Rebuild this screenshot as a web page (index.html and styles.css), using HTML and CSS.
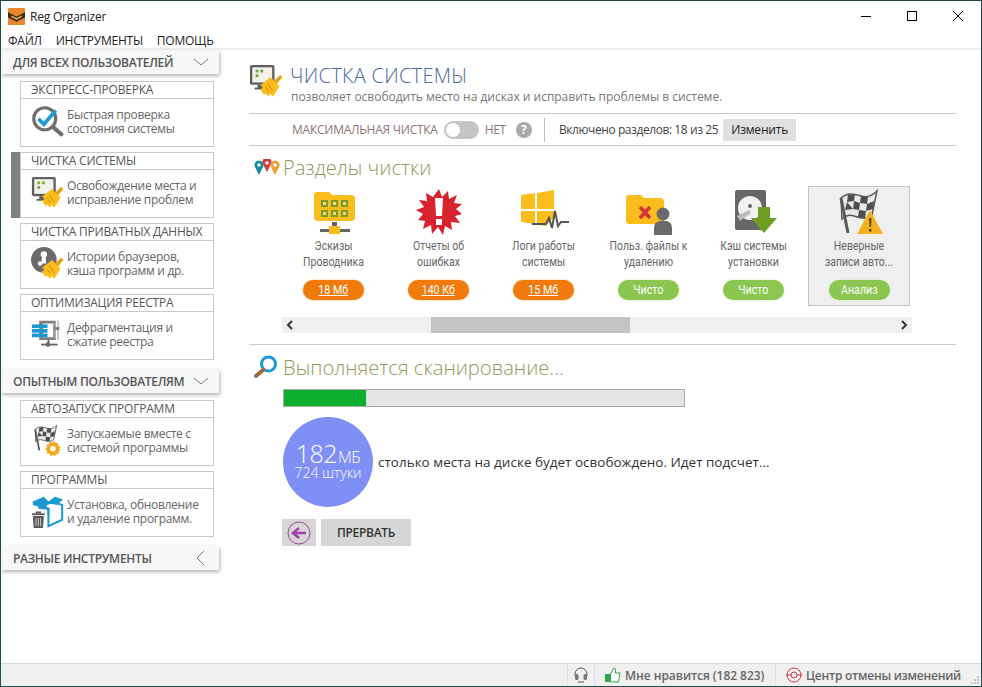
FILE: index.html
```html
<!DOCTYPE html>
<html lang="ru">
<head>
  <meta charset="UTF-8">
  <title>Reg Organizer</title>
  <link rel="stylesheet" href="styles.css">
</head>
<body>
  <svg class="defs" width="0" height="0">
    <defs>
      <symbol id="broom" viewBox="0 0 20 20">
        <path d="M11 7 L17.5 0.5 L19.5 2.5 L13.5 9.5 Z" fill="#e0a010"/>
        <path d="M9.5 2.5 L17 10 L11.5 19 L9 16.5 L8 19 L5 16 L4 17.5 L0.5 12.5 L3 11.5 L1 9 Z" fill="#fbbd1c"/>
        <path d="M7 7.5 L11.5 14 M5 10 L8 14.5" stroke="#d99a0c" stroke-width="1" fill="none"/>
      </symbol>
      <symbol id="monitor" viewBox="0 0 36 36">
        <rect x="1" y="1" width="26" height="21" rx="2" fill="#5f5f5f"/>
        <rect x="3.5" y="3.5" width="21" height="16" fill="#f2f2ea"/>
        <rect x="7" y="6" width="3" height="3" fill="#77a83a"/>
        <rect x="12" y="6" width="3" height="3" fill="#77a83a"/>
        <rect x="7" y="11" width="3" height="3" fill="#77a83a"/>
        <rect x="9" y="22" width="9" height="4" fill="#5f5f5f"/>
        <rect x="6" y="25" width="14" height="2" fill="#5f5f5f"/>
        <use href="#broom" x="11" y="11" width="25" height="25"/>
      </symbol>
      <symbol id="check" viewBox="0 0 36 36">
        <circle cx="15" cy="15" r="12" fill="#fff" stroke="#6e6e6e" stroke-width="3.5"/>
        <path d="M24 24 L33 32" stroke="#6e6e6e" stroke-width="4.5" stroke-linecap="round"/>
        <path d="M8 15 L14 21 L27 6" fill="none" stroke="#1e9ad6" stroke-width="4"/>
      </symbol>
      <symbol id="privacy" viewBox="0 0 36 36">
        <circle cx="14" cy="14" r="14" fill="#6a6a6a"/>
        <circle cx="14" cy="8" r="3.5" fill="#fff"/>
        <path d="M12 10 L16 10 L16.5 18 L11.5 18 Z" fill="#fff"/>
        <circle cx="10" cy="18" r="2.5" fill="#fff"/>
        <use href="#broom" x="11" y="11" width="25" height="25"/>
      </symbol>
      <symbol id="registry" viewBox="0 0 36 36">
        <path d="M9 3 L27 3 L27 6 L13 6 L13 21 L27 21 L27 24 L9 24 Z" fill="#808080"/>
        <rect x="24" y="5" width="3" height="17" fill="#9a9a9a"/>
        <rect x="29" y="3" width="1" height="21" fill="#808080"/>
        <rect x="26" y="10" width="5" height="3" fill="#808080"/>
        <rect x="1" y="7" width="17" height="4" fill="#1a9ad0"/>
        <rect x="1" y="12" width="17" height="4" fill="#1a9ad0"/>
        <rect x="1" y="17" width="17" height="4" fill="#1a9ad0"/>
        <rect x="18" y="24" width="2" height="5" fill="#666"/>
        <rect x="11" y="28" width="18" height="2" fill="#666"/>
        <circle cx="18.5" cy="29" r="2.5" fill="#666"/>
      </symbol>
      <symbol id="flag" viewBox="0 0 46 46">
        <path d="M7 9 C14 3 20 5 27 7 C33 9 38 7 43 2 L38 26 C32 31 26 29 20 27 C15 25 11 27 8 30 Z" fill="#e9e9e9" stroke="#5a5a5a" stroke-width="1.5"/>
        <path d="M14 6 L21 5 L20 12 L13 13 Z M27 7 L34 8 L33 15 L26 14 Z M20 12 L26 14 L25 21 L19 20 Z M33 15 L40 12 L39 20 L32 22 Z M13 13 L19 20 L11 21 Z M25 21 L32 22 L31 29 L24 28 Z" fill="#4f4f4f"/>
        <path d="M7 9 L14 44" stroke="#5a5a5a" stroke-width="3"/>
      </symbol>
      <symbol id="box" viewBox="0 0 36 36">
        <path d="M11 11 L25 8 L34 11 L34 27 L19 34 L19 15 Z" fill="#fff" stroke="#1a9ad0" stroke-width="2.2"/>
        <path d="M2 7 L14 2 L19 7 L26 2 L35 5 L28 11 L19 9 L15 15 L2 11 Z" fill="#1a9ad0"/>
        <path d="M8 14 L19 15 L19 22" stroke="#1a9ad0" stroke-width="2.2" fill="none"/>
        <rect x="1" y="20" width="14" height="2" fill="#555"/>
        <rect x="5" y="18" width="6" height="2" fill="#555"/>
        <path d="M2 23 L14 23 L13 36 L3 36 Z" fill="#555"/>
        <path d="M5.5 25 V34 M8 25 V34 M10.5 25 V34" stroke="#ddd" stroke-width="1"/>
      </symbol>
    </defs>
  </svg>

  <div class="window">
    <div class="titlebar">
      <svg class="app-icon" viewBox="0 0 16 16">
        <rect width="16" height="16" rx="1" fill="#e8872c"/>
        <path d="M0 4 L8 8 L16 4 V9 L8 13 L0 9 Z" fill="#3a2c1c"/>
        <path d="M3 7 L8 9.5 L13 7 L13 8.5 L8 11 L3 8.5 Z" fill="#e9b64a"/>
      </svg>
      <span class="app-name">Reg Organizer</span>
      <div class="win-controls">
        <svg viewBox="0 0 46 30" class="win-btn"><path d="M18 15.5 H28" stroke="#000"/></svg>
        <svg viewBox="0 0 46 30" class="win-btn"><rect x="18.5" y="10.5" width="9" height="9" fill="none" stroke="#000"/></svg>
        <svg viewBox="0 0 46 30" class="win-btn"><path d="M18 10 L28 20 M28 10 L18 20" stroke="#000"/></svg>
      </div>
    </div>

    <div class="menubar">
      <span>ФАЙЛ</span>
      <span>ИНСТРУМЕНТЫ</span>
      <span>ПОМОЩЬ</span>
    </div>

    <div class="workspace">
      <aside class="sidebar">
        <div class="group-head">
          <span>ДЛЯ ВСЕХ ПОЛЬЗОВАТЕЛЕЙ</span>
          <svg class="chev" viewBox="0 0 14 14"><path d="M0 4 L7 10 L14 4" fill="none" stroke="#777"/></svg>
        </div>
        <div class="group-items">
          <div class="card">
            <div class="card-title">ЭКСПРЕСС-ПРОВЕРКА</div>
            <div class="card-body">
              <svg class="card-icon"><use href="#check"/></svg>
              <p>Быстрая проверка<br>состояния системы</p>
            </div>
          </div>
          <div class="card active">
            <div class="card-title">ЧИСТКА СИСТЕМЫ</div>
            <div class="card-body">
              <svg class="card-icon"><use href="#monitor"/></svg>
              <p>Освобождение места и<br>исправление проблем</p>
            </div>
          </div>
          <div class="card">
            <div class="card-title">ЧИСТКА ПРИВАТНЫХ ДАННЫХ</div>
            <div class="card-body">
              <svg class="card-icon"><use href="#privacy"/></svg>
              <p>Истории браузеров,<br>кэша программ и др.</p>
            </div>
          </div>
          <div class="card">
            <div class="card-title">ОПТИМИЗАЦИЯ РЕЕСТРА</div>
            <div class="card-body">
              <svg class="card-icon"><use href="#registry"/></svg>
              <p>Дефрагментация и<br>сжатие реестра</p>
            </div>
          </div>
        </div>

        <div class="group-head">
          <span>ОПЫТНЫМ ПОЛЬЗОВАТЕЛЯМ</span>
          <svg class="chev" viewBox="0 0 14 14"><path d="M0 4 L7 10 L14 4" fill="none" stroke="#777"/></svg>
        </div>
        <div class="group-items">
          <div class="card">
            <div class="card-title">АВТОЗАПУСК ПРОГРАММ</div>
            <div class="card-body">
              <svg class="card-icon" viewBox="0 0 36 36">
                <use href="#flag" width="30" height="30"/>
                <circle cx="24" cy="27" r="5" fill="none" stroke="#f0a81c" stroke-width="4"/>
                <circle cx="24" cy="27" r="7" fill="none" stroke="#f0a81c" stroke-width="2" stroke-dasharray="2 2"/>
              </svg>
              <p>Запускаемые вместе с<br>системой программы</p>
            </div>
          </div>
          <div class="card">
            <div class="card-title">ПРОГРАММЫ</div>
            <div class="card-body">
              <svg class="card-icon"><use href="#box"/></svg>
              <p>Установка, обновление<br>и удаление программ.</p>
            </div>
          </div>
        </div>

        <div class="group-head">
          <span>РАЗНЫЕ ИНСТРУМЕНТЫ</span>
          <svg class="chev" viewBox="0 0 14 14"><path d="M10 0 L3 7 L10 14" fill="none" stroke="#777"/></svg>
        </div>
      </aside>

      <main class="main">
        <div class="page-head">
          <svg class="page-icon"><use href="#monitor"/></svg>
          <div>
            <h1>ЧИСТКА СИСТЕМЫ</h1>
            <p>позволяет освободить место на дисках и исправить проблемы в системе.</p>
          </div>
        </div>

        <div class="options">
          <span class="opt-label">МАКСИМАЛЬНАЯ ЧИСТКА</span>
          <span class="toggle"><i></i></span>
          <span class="opt-value">НЕТ</span>
          <span class="help">?</span>
          <span class="opt-sep"></span>
          <span class="opt-count">Включено разделов: 18 из 25</span>
          <button class="change-btn">Изменить</button>
        </div>

        <div class="section-head sections">
          <svg class="pins" viewBox="0 0 26 16">
            <path d="M5 16 L1 8 A4.5 4.5 0 1 1 9 8 Z" fill="#1a8a9a"/><circle cx="5" cy="6" r="1.8" fill="#fff"/>
            <path d="M13 13 L9 5 A4.5 4.5 0 1 1 17 5 Z" fill="#d0383a"/><circle cx="13" cy="4" r="1.8" fill="#fff"/>
            <path d="M21 16 L17 8 A4.5 4.5 0 1 1 25 8 Z" fill="#f0a030"/><circle cx="21" cy="6" r="1.8" fill="#fff"/>
          </svg>
          <h2>Разделы чистки</h2>
        </div>

        <div class="tiles">
          <div class="tile">
            <svg class="tile-icon" viewBox="0 0 46 46">
              <path d="M3 6 Q3 3 6 3 H18 L21 6 H40 Q44 6 44 10 V28 Q44 32 40 32 H7 Q3 32 3 28 Z" fill="#fbbd1c"/>
              <g fill="#e8dc8a" stroke="#7d9a2c" stroke-width="2">
                <rect x="11" y="12" width="5" height="5"/><rect x="21" y="12" width="5" height="5"/><rect x="31" y="12" width="5" height="5"/>
                <rect x="11" y="22" width="5" height="5"/><rect x="21" y="22" width="5" height="5"/><rect x="31" y="22" width="5" height="5"/>
              </g>
              <rect x="21" y="33" width="5" height="5" fill="#666"/>
              <rect x="9" y="40" width="10" height="3" fill="#666"/><rect x="29" y="40" width="10" height="3" fill="#666"/>
              <rect x="18" y="37" width="11" height="8" fill="#fbbd1c"/>
            </svg>
            <div class="tile-name">Эскизы<br>Проводника</div>
            <a class="pill orange"><span>18 Мб</span></a>
          </div>
          <div class="tile">
            <svg class="tile-icon" viewBox="0 0 46 46">
              <path d="M23 0 L26 8 L32 2 L33 10 L41 6 L38 14 L46 15 L40 20 L46 25 L39 27 L44 34 L35 33 L36 41 L29 37 L27 46 L22 38 L16 45 L15 36 L7 40 L9 32 L2 31 L7 25 L0 21 L8 18 L3 11 L11 12 L10 4 L17 8 Z" fill="#d8232e"/>
              <path d="M19 9 H27 L26 27 H20 Z" fill="#fff"/><rect x="20" y="30" width="6" height="6" fill="#fff"/>
            </svg>
            <div class="tile-name">Отчеты об<br>ошибках</div>
            <a class="pill orange"><span>140 Кб</span></a>
          </div>
          <div class="tile">
            <svg class="tile-icon" viewBox="0 0 50 46">
              <path d="M2 6 L16 4 V20 H2 Z M18 4 L35 1 V20 H18 Z M2 22 H16 V35 L2 33 Z M18 22 H35 V29 L30 33 L27 37 L18 36 Z" fill="#fbbd1c"/>
              <path d="M13 35 H27 L30 29 L33 39 L36 22 L39 37 L42 33 H50" fill="none" stroke="#555" stroke-width="2"/>
            </svg>
            <div class="tile-name">Логи работы<br>системы</div>
            <a class="pill orange"><span>15 Мб</span></a>
          </div>
          <div class="tile">
            <svg class="tile-icon" viewBox="0 0 50 46">
              <path d="M2 9 Q2 6 5 6 H17 L20 9 H36 Q40 9 40 13 V32 Q40 35 37 35 H5 Q2 35 2 32 Z" fill="#fbbd1c"/>
              <path d="M16 18 L26 29 M26 18 L16 29" stroke="#d8323a" stroke-width="3.5"/>
              <circle cx="39" cy="25" r="6.5" fill="#6a6a6a"/>
              <path d="M30 46 V39 Q30 33 36 32 H42 Q48 33 48 39 V46 Z" fill="#6a6a6a"/>
            </svg>
            <div class="tile-name">Польз. файлы к<br>удалению</div>
            <a class="pill green"><span>Чисто</span></a>
          </div>
          <div class="tile">
            <svg class="tile-icon" viewBox="0 0 50 46">
              <rect x="6" y="1" width="31" height="40" rx="2" fill="#666"/>
              <circle cx="21" cy="19" r="12" fill="#f2f2f2"/>
              <circle cx="21" cy="17" r="2" fill="#666"/>
              <path d="M8 27 L20 21 L22 24 L11 32 Z" fill="#bbb"/>
              <path d="M29 18 H41 V29 H48 L35 44 L22 29 H29 Z" fill="#6f9e25"/>
            </svg>
            <div class="tile-name">Кэш системы<br>установки</div>
            <a class="pill green"><span>Чисто</span></a>
          </div>
          <div class="tile selected">
            <svg class="tile-icon" viewBox="0 0 50 46">
              <use href="#flag" width="46" height="46"/>
              <path d="M36 21 L49 45 H23 Z" fill="#f3b11e"/>
              <path d="M35 29 H37.5 L37 38 H35.5 Z M35 40 H37.5 V42.5 H35 Z" fill="#5a4a20"/>
            </svg>
            <div class="tile-name">Неверные<br>записи авто...</div>
            <a class="pill green"><span>Анализ</span></a>
          </div>
        </div>

        <div class="hscroll">
          <svg class="arrow" viewBox="0 0 16 16"><path d="M10 4 L6 8 L10 12" fill="none" stroke="#333" stroke-width="2"/></svg>
          <div class="track"><div class="thumb"></div></div>
          <svg class="arrow" viewBox="0 0 16 16"><path d="M6 4 L10 8 L6 12" fill="none" stroke="#333" stroke-width="2"/></svg>
        </div>

        <div class="scan">
          <div class="section-head">
            <svg class="lens" viewBox="0 0 24 24">
              <circle cx="14.5" cy="9" r="7" fill="#fff" stroke="#1a9ad0" stroke-width="3"/>
              <path d="M9 15 L2 21" stroke="#a0683c" stroke-width="4" stroke-linecap="round"/>
            </svg>
            <h2>Выполняется сканирование...</h2>
          </div>
          <div class="progress"><div class="progress-fill" style="width: 20.5%"></div></div>
          <div class="result">
            <div class="circle">
              <div class="circle-size">182<small>МБ</small></div>
              <div class="circle-count">724 штуки</div>
            </div>
            <span>столько места на диске будет освобождено. Идет подсчет...</span>
          </div>
          <div class="actions">
            <button class="back-btn">
              <svg viewBox="0 0 24 24">
                <circle cx="12" cy="12" r="11" fill="none" stroke="#9a4a9a"/>
                <path d="M19 12 H8 M12 7 L6 12 L12 17" fill="none" stroke="#a040a8" stroke-width="2.5"/>
              </svg>
            </button>
            <button class="stop-btn">ПРЕРВАТЬ</button>
          </div>
        </div>
      </main>
    </div>

    <footer class="statusbar">
      <div class="status-item headset">
        <svg viewBox="0 0 16 16"><path d="M2 9 V7 A6 6 0 0 1 14 7 V9" fill="none" stroke="#555"/><rect x="2" y="7" width="3.5" height="6" rx="1.5" fill="#777"/><rect x="10.5" y="7" width="3.5" height="6" rx="1.5" fill="#777"/><path d="M5 15 H11" stroke="#555"/></svg>
      </div>
      <div class="status-item like">
        <svg viewBox="0 0 16 16"><rect x="0" y="7" width="5" height="8" fill="#2ea84f"/><path d="M5.5 7 L9 1 Q11 1 10.5 4 L10 6 H15 L13.5 15 H5.5 Z" fill="#fff" stroke="#2ea84f"/></svg>
        <span>Мне нравится (182 823)</span>
      </div>
      <div class="status-item undo">
        <svg viewBox="0 0 16 16"><circle cx="8" cy="8" r="7" fill="none" stroke="#d0383a"/><circle cx="8" cy="8" r="3" fill="none" stroke="#d0383a"/><path d="M0 8 H5 M11 8 H16" stroke="#d0383a"/></svg>
        <span>Центр отмены изменений</span>
        <svg class="grip" viewBox="0 0 10 10"><path d="M7 1 h2 v2 h-2 z M4 4 h2 v2 h-2 z M7 4 h2 v2 h-2 z M1 7 h2 v2 h-2 z M4 7 h2 v2 h-2 z M7 7 h2 v2 h-2 z" fill="#c4c4c4"/></svg>
      </div>
    </footer>
  </div>
</body>
</html>
```

FILE: styles.css
```css
* {
  box-sizing: border-box;
}

body {
  margin: 0;
  font-family: 'Open Sans', 'Noto Sans', sans-serif;
  font-size: 12px;
  color: #333;
  background: #fff;
}

.defs {
  display: block;
  height: 0;
}

.window {
  width: 982px;
  height: 687px;
  border: 1px solid #1f4d47;
  display: flex;
  flex-direction: column;
  background: #fff;
  overflow: hidden;
}

/* Title and menu */
.titlebar {
  height: 30px;
  display: flex;
  align-items: center;
  padding-left: 7px;
}

.app-icon {
  width: 17px;
  height: 17px;
}

.app-name {
  margin-left: 5px;
  letter-spacing: -0.2px;
  color: #222;
}

.win-controls {
  margin-left: auto;
  display: flex;
}

.win-btn {
  width: 46px;
  height: 30px;
}

.menubar {
  height: 19px;
  padding: 2px 0 0 7px;
  display: flex;
  gap: 14px;
  align-items: center;
  color: #222;
  letter-spacing: -0.25px;
  border-bottom: 2px solid #f0f0f0;
}

.workspace {
  flex: 1;
  display: flex;
  min-height: 0;
}

/* Sidebar */
.sidebar {
  width: 218px;
  flex: none;
}

.group-head {
  height: 24px;
  display: flex;
  align-items: center;
  justify-content: space-between;
  padding: 0 11px 0 12px;
  background: #f7f7f7;
  box-shadow: 1px 2px 4px rgba(0, 0, 0, 0.3);
  font-weight: 600;
  color: #555;
  letter-spacing: -0.3px;
}

.chev {
  width: 14px;
  height: 14px;
}

.group-items {
  padding: 7px 0 9px 19px;
  display: flex;
  flex-direction: column;
  gap: 5px;
}

.card {
  width: 194px;
  height: 66px;
  border: 1px solid #c8c8c8;
}

.card.active {
  box-shadow: -9px 0 0 #808080;
}

.card-title {
  height: 17px;
  line-height: 15px;
  padding-left: 10px;
  border-bottom: 1px solid #c8c8c8;
  color: #555;
  letter-spacing: -0.22px;
  white-space: nowrap;
}

.card-body {
  display: flex;
  align-items: center;
  height: 47px;
  padding: 0 0 2px 10px;
}

.card-icon {
  width: 33px;
  height: 33px;
  flex: none;
  margin-right: 3px;
}

.card-body p {
  margin: 0;
  line-height: 14px;
  color: #666;
  letter-spacing: -0.3px;
  white-space: nowrap;
}

/* Main area */
.main {
  width: 707px;
  margin-left: 30px;
  display: flex;
  flex-direction: column;
}

.page-head {
  height: 64px;
  display: flex;
  align-items: flex-start;
  padding-top: 14px;
  border-bottom: 1px solid #c8c8c8;
}

.page-icon {
  width: 34px;
  height: 34px;
  margin-right: 7px;
  flex: none;
}

.page-head h1 {
  margin: 0;
  font-size: 20px;
  line-height: 24px;
  font-weight: 300;
  color: #4c6a9a;
  letter-spacing: 0.3px;
}

.page-head p {
  margin: 2px 0 0 1px;
  line-height: 14px;
  color: #777;
  letter-spacing: -0.02px;
}

.options {
  height: 32px;
  display: flex;
  align-items: center;
  padding-left: 43px;
  border-bottom: 1px solid #c8c8c8;
}

.opt-label {
  color: #8f7474;
  letter-spacing: -0.25px;
}

.toggle {
  width: 35px;
  height: 18px;
  margin-left: 6px;
  border-radius: 9px;
  background: #c4c4c4;
  padding: 2px;
}

.toggle i {
  display: block;
  width: 14px;
  height: 14px;
  border-radius: 50%;
  background: #fff;
}

.opt-value {
  margin-left: 6px;
  color: #8f7474;
  letter-spacing: -0.3px;
}

.help {
  width: 16px;
  height: 16px;
  margin-left: 10px;
  border-radius: 50%;
  background: #aaa;
  color: #fff;
  font-weight: 700;
  font-size: 12px;
  line-height: 16px;
  text-align: center;
}

.opt-sep {
  width: 1px;
  height: 24px;
  margin: 0 14px 0 12px;
  background: #bbb;
}

.opt-count {
  color: #444;
  letter-spacing: -0.42px;
}

.change-btn {
  width: 73px;
  height: 22px;
  margin-left: 5px;
  border: 0;
  background: #e0e0e0;
  color: #222;
  font: inherit;
  letter-spacing: -0.2px;
}

.section-head {
  display: flex;
  align-items: center;
}

.section-head h2 {
  margin: 0;
  font-size: 20.2px;
  line-height: 26px;
  font-weight: 300;
  color: #8f9a5a;
}

.sections {
  margin-top: 8px;
  padding-left: 5px;
}

.pins {
  width: 26px;
  height: 16px;
  margin-right: 3px;
}

/* Cleanup tiles */
.tiles {
  display: flex;
  margin: 6px 0 0 32px;
  height: 120px;
}

.tile {
  width: 105px;
  height: 120px;
  text-align: center;
  padding-top: 2px;
  border: 1px solid transparent;
}

.tile.selected {
  width: 102px;
  margin-left: 2px;
  background: #efefef;
  border-color: #c4c4c4;
}

.tile-icon {
  display: block;
  width: 50px;
  height: 46px;
  margin: 0 auto;
}

/* no condensed face installed, so Roboto is squeezed to that width */
.tile-name {
  margin-top: 3px;
  font-family: Roboto, sans-serif;
  font-size: 12.5px;
  line-height: 16px;
  color: #666;
  white-space: nowrap;
  transform: scaleX(0.84);
}

.pill {
  display: block;
  width: 61px;
  height: 20px;
  margin: 10px auto 0;
  border-radius: 10px;
  font-family: Roboto, sans-serif;
  font-size: 13px;
  line-height: 19px;
  color: #fff;
}

.pill span {
  display: inline-block;
  transform: scaleX(0.82);
}

.pill.orange {
  background: #f07a0c;
  box-shadow: 0 0 2px #f9b060;
}

.pill.orange span {
  text-decoration: underline;
}

.pill.green {
  background: #8ac650;
  box-shadow: 0 0 2px #c8e8a0;
}

.hscroll {
  display: flex;
  width: 630px;
  height: 16px;
  margin: 11px 0 0 33px;
  background: #f0f0f0;
}

.arrow {
  width: 16px;
  height: 16px;
  flex: none;
}

.track {
  flex: 1;
}

.thumb {
  width: 199px;
  height: 16px;
  margin-left: 133px;
  background: #c4c4c4;
}

/* Scan block */
.scan {
  margin-top: 11px;
  padding: 9px 0 0 5px;
  border-top: 1px solid #c8c8c8;
}

.lens {
  width: 24px;
  height: 24px;
  margin-right: 5px;
}

.progress {
  width: 402px;
  height: 18px;
  margin: 9px 0 0 29px;
  background: #e4e4e4;
  border: 1px solid #aaa;
}

.progress-fill {
  height: 100%;
  background: #0cae2e;
}

.result {
  display: flex;
  align-items: center;
  margin: 10px 0 0 29px;
  font-size: 13.5px;
  color: #333;
}

.result span {
  margin-left: 5px;
}

.circle {
  width: 90px;
  height: 90px;
  border-radius: 50%;
  background: #7f8ff5;
  color: #fff;
  text-align: center;
  padding-top: 23px;
  flex: none;
  font-weight: 300;
}

.circle-size {
  font-size: 25px;
  line-height: 26px;
  letter-spacing: -0.5px;
}

.circle-size small {
  font-size: 16px;
  line-height: 0;
  margin-left: 1px;
}

.circle-count {
  font-size: 14px;
  line-height: 14px;
}

.actions {
  display: flex;
  gap: 5px;
  margin: 12px 0 0 28px;
}

.actions button {
  border: 0;
  height: 27px;
  background: #d6d6d6;
  padding: 0;
}

.back-btn {
  width: 34px;
}

.back-btn svg {
  display: block;
  width: 24px;
  height: 24px;
  margin: 0 auto;
}

.stop-btn {
  width: 90px;
  font: 600 12px 'Open Sans', sans-serif;
  color: #333;
  letter-spacing: -0.3px;
}

/* Status bar */
.statusbar {
  height: 23px;
  flex: none;
  display: flex;
  justify-content: flex-end;
  background: #f0f0f0;
  border-top: 1px solid #d8d8d8;
  font-weight: 600;
  color: #666;
}

.status-item {
  display: flex;
  align-items: center;
  border-left: 1px solid #e0e0e0;
}

.status-item svg {
  width: 16px;
  height: 16px;
  margin-right: 4px;
  flex: none;
}

.headset {
  width: 27px;
  padding-left: 5px;
}

.like {
  width: 181px;
  padding-left: 10px;
  letter-spacing: -0.05px;
}

.undo {
  width: 206px;
  padding-left: 10px;
  letter-spacing: -0.25px;
}

.status-item .grip {
  width: 10px;
  height: 10px;
  margin: 10px 0 0 9px;
}
```
